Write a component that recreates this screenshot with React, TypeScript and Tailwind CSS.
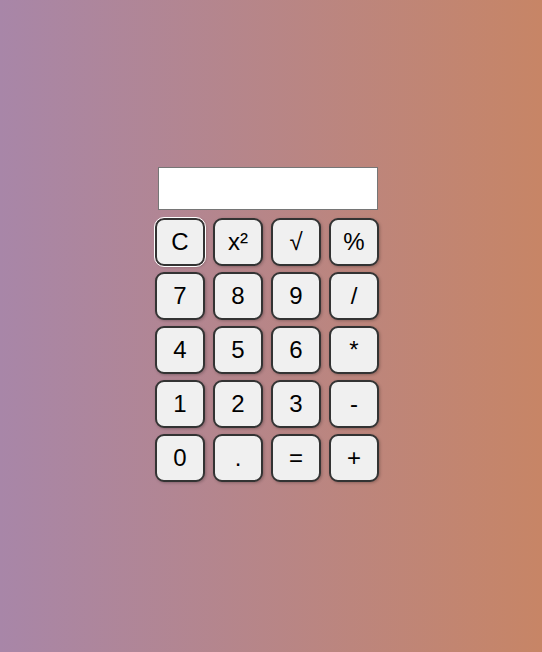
import React from 'react';

const keys = ['C', 'x²', '√', '%', '7', '8', '9', '/', '4', '5', '6', '*', '1', '2', '3', '-', '0', '.', '=', '+'];

export default function App() {
  return (
    <div className="w-full h-[652px] bg-[linear-gradient(to_right,#a886a8,#c78566)] pt-[167px] pl-[155px] font-['Liberation_Sans',Arial,sans-serif]">
      <div className="flex flex-col w-[224px]">
        {/* Display */}
        <input
          type="text"
          readOnly
          className="ml-[3px] w-[220px] h-[43px] bg-white border border-[#767676] outline-none"
        />

        {/* Keypad */}
        <div className="grid grid-cols-4 gap-x-[8px] gap-y-[6px] mt-[8px]">
          {keys.map((k, i) => (
            <button
              key={k}
              className={`w-[50px] h-[48px] rounded-[9px] border-2 border-[#333] bg-[#f0f0f0] text-[24px] text-black shadow-[1px_1px_3px_rgba(0,0,0,0.25)] flex items-center justify-center ${
                i === 0 ? 'outline outline-1 outline-white' : ''
              }`}
            >
              {k}
            </button>
          ))}
        </div>
      </div>
    </div>
  );
}
